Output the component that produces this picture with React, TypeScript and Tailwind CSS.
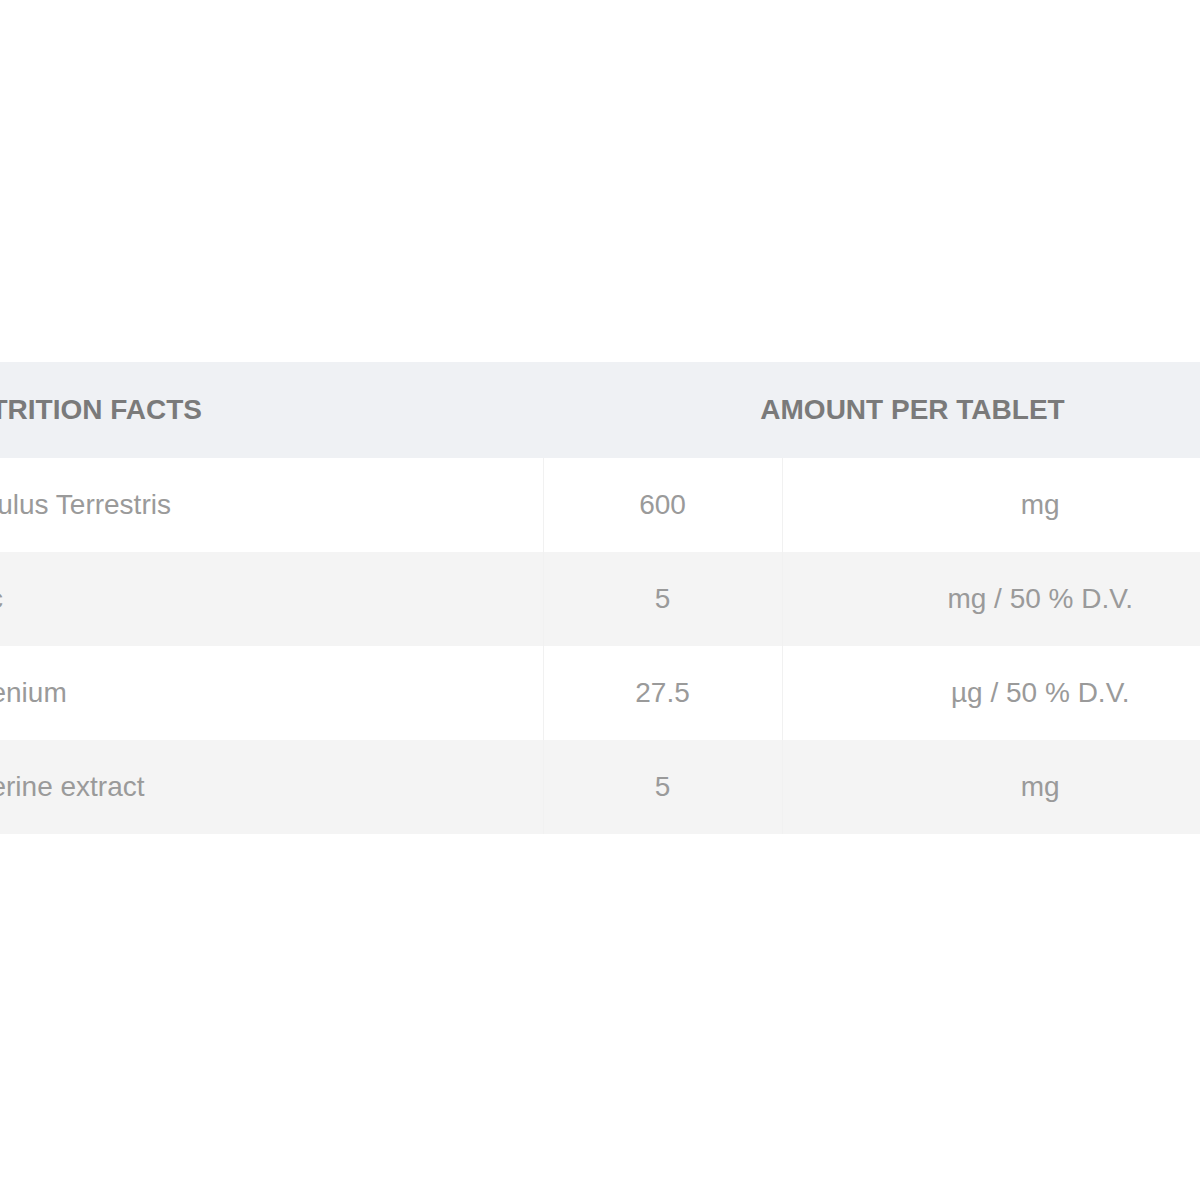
export default function App() {
  const rows = [
    { name: "Tribulus Terrestris", amount: "600", unit: "mg" },
    { name: "Zinc", amount: "5", unit: "mg / 50 % D.V." },
    { name: "Selenium", amount: "27.5", unit: "µg / 50 % D.V." },
    { name: "Piperine extract", amount: "5", unit: "mg" },
  ]

  return (
    <div className="min-h-[1200px] w-full overflow-hidden bg-white pt-[362px] font-['Liberation_Sans',Arial,sans-serif]">
      {/* Nutrition table, wider than the viewport */}
      <table className="ml-[-70px] w-[1368px] table-fixed border-collapse">
        <colgroup>
          <col className="w-[613px]" />
          <col className="w-[239px]" />
          <col className="w-[516px]" />
        </colgroup>
        <thead>
          <tr className="h-[96px] bg-[#eff1f4]">
            <th className="pl-[20px] text-left text-[28px] font-bold uppercase text-[#7a7a7a]">
              Nutrition Facts
            </th>
            <th
              colSpan={2}
              className="pr-[16px] text-center text-[28px] font-bold uppercase text-[#7a7a7a]"
            >
              Amount per tablet
            </th>
          </tr>
        </thead>
        <tbody>
          {rows.map((row, i) => (
            <tr
              key={row.name}
              className={i % 2 === 0 ? "h-[94px] bg-white" : "h-[94px] bg-[#f4f4f4]"}
            >
              <td className="border-r border-[#f1f1f1] pl-[20px] text-left text-[28px] text-[#9a9a9a]">
                {row.name}
              </td>
              <td className="border-r border-[#f1f1f1] text-center text-[28px] text-[#9a9a9a]">
                {row.amount}
              </td>
              <td className="text-center text-[28px] text-[#9a9a9a]">{row.unit}</td>
            </tr>
          ))}
        </tbody>
      </table>
    </div>
  )
}
